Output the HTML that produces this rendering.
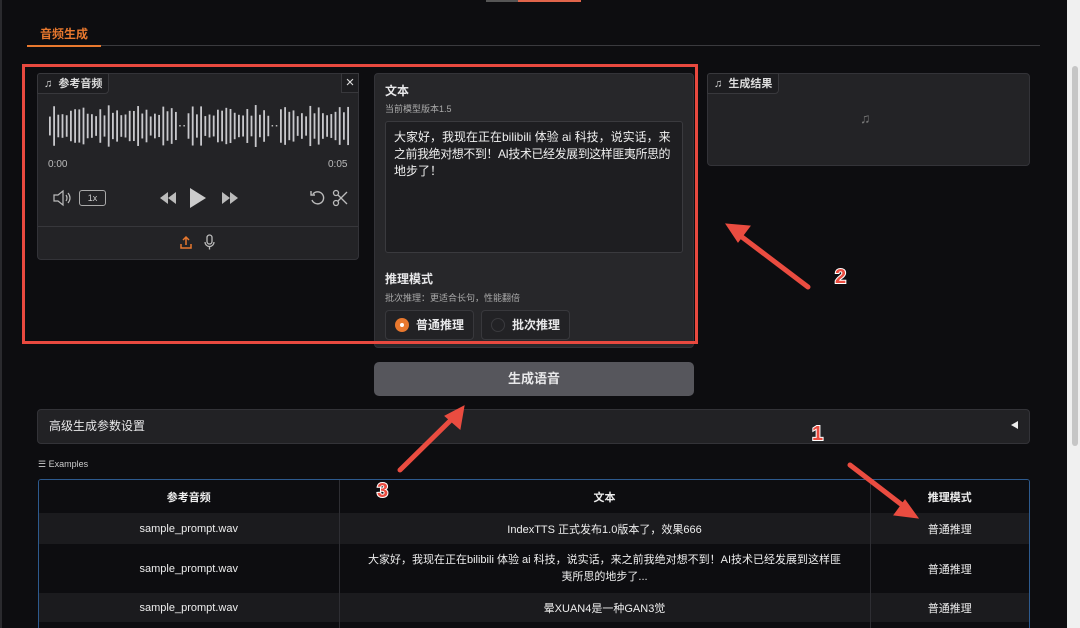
<!DOCTYPE html>
<html><head><meta charset="utf-8"><style>
*{box-sizing:border-box;margin:0;padding:0}
html,body{width:1080px;height:628px;overflow:hidden}
body{background:#0d0d10;font-family:"Liberation Sans","Noto Sans CJK SC",sans-serif;color:#e8e8ea;position:relative}
.a{position:absolute}
.panel{background:#232326;border:1px solid #333338;border-radius:4px}
.lbl{background:#1d1d20;border:1px solid #38383c;border-radius:3px 0 4px 0;font-size:11px;font-weight:bold;color:#ddd;padding:0 6px;line-height:20px}
table{border-collapse:collapse;width:100%;font-size:11px;color:#eee}
td,th{text-align:center;border-right:1px solid #2e2e33;padding:0 10px}
td:last-child,th:last-child{border-right:none}
</style></head><body>
<div class="a" style="left:0;top:0;width:2px;height:628px;background:#2a2a2e"></div>
<div class="a" style="left:486px;top:0;width:32px;height:2px;background:#555"></div>
<div class="a" style="left:518px;top:0;width:63px;height:2px;background:#e0644a"></div>
<div class="a" style="left:1067px;top:0;width:13px;height:628px;background:#f0f0f0"></div>
<div class="a" style="left:1072px;top:66px;width:6px;height:380px;background:#c6c6c6;border-radius:3px"></div>
<div class="a" style="left:40px;top:25px;font-size:12px;font-weight:bold;color:#e8782e">音频生成</div>
<div class="a" style="left:27px;top:45px;width:1013px;height:1px;background:#3a3a3e"></div>
<div class="a" style="left:27px;top:45px;width:74px;height:2px;background:#e8782e"></div>

<div class="a panel" style="left:37px;top:73px;width:322px;height:187px"></div>
<div class="a lbl" style="left:37px;top:73px;height:21px">♫&nbsp; 参考音频</div>
<div class="a" style="left:341px;top:73px;width:18px;height:20px;background:#1d1d20;border:1px solid #38383c;font-size:15px;line-height:18px;text-align:center;color:#ddd">×</div>
<svg class="a" style="left:48px;top:104px" width="302" height="44" id="wv"></svg>
<div class="a" style="left:48px;top:159px;font-size:10px;color:#bbb">0:00</div>
<div class="a" style="left:328px;top:159px;font-size:10px;color:#bbb">0:05</div>
<svg class="a" style="left:52px;top:189px" width="20" height="18" viewBox="0 0 20 18"><path d="M2 6h4l5-4v14l-5-4H2z" fill="none" stroke="#bbb" stroke-width="1.2"/><path d="M14 6q2 3 0 6M16 4q4 5 0 10" fill="none" stroke="#bbb" stroke-width="1.2"/></svg>
<div class="a" style="left:79px;top:190px;width:27px;height:16px;border:1px solid #aaa;border-radius:3px;font-size:9px;text-align:center;line-height:14px;color:#ccc">1x</div>
<svg class="a" style="left:156px;top:186px" width="90" height="24"><path d="M20 6v12l-8-6zM12 6v12l-8-6z" fill="#bbb"/><path d="M34 2v20l16-10z" fill="#ccc"/><path d="M66 6v12l8-6zM74 6v12l8-6z" fill="#bbb"/></svg>
<svg class="a" style="left:309px;top:189px" width="40" height="18"><path d="M4 5a6 6 0 1 1-1 6" fill="none" stroke="#bbb" stroke-width="1.4"/><path d="M2 2v4h4" fill="none" stroke="#bbb" stroke-width="1.4"/><circle cx="27" cy="4" r="2.5" fill="none" stroke="#bbb" stroke-width="1.3"/><circle cx="27" cy="14" r="2.5" fill="none" stroke="#bbb" stroke-width="1.3"/><path d="M29 6l9 9M29 12l9-9" stroke="#bbb" stroke-width="1.3"/></svg>
<div class="a" style="left:38px;top:226px;width:320px;height:1px;background:#37373b"></div>
<svg class="a" style="left:179px;top:234px" width="40" height="16"><path d="M7 11V3M4 6l3-3 3 3M2 10v4h10v-4" fill="none" stroke="#e8782e" stroke-width="1.5"/><rect x="28" y="1" width="5" height="9" rx="2.5" fill="none" stroke="#bbb" stroke-width="1.3"/><path d="M26 8a4.5 4.5 0 0 0 9 0M30.5 12.5v3" fill="none" stroke="#bbb" stroke-width="1.3"/></svg>

<div class="a panel" style="left:374px;top:73px;width:320px;height:275px;background:#27272a"></div>
<div class="a" style="left:385px;top:82px;font-size:12px;font-weight:bold">文本</div>
<div class="a" style="left:385px;top:102px;font-size:9px;color:#aaa">当前模型版本1.5</div>
<div class="a" style="left:385px;top:121px;width:298px;height:132px;background:#1e1e21;border:1px solid #3a3a3e;border-radius:3px;padding:7px 0 7px 8px;font-size:12px;line-height:17px;color:#f0f0f0;white-space:nowrap;overflow:hidden"><span>大家好，我现在正在bilibili 体验 ai 科技，说实话，来</span><br><span style="letter-spacing:-0.45px">之前我绝对想不到！AI技术已经发展到这样匪夷所思的</span><br>地步了！</div>
<div class="a" style="left:385px;top:270px;font-size:12px;font-weight:bold">推理模式</div>
<div class="a" style="left:385px;top:291px;font-size:9px;color:#aaa">批次推理：更适合长句，性能翻倍</div>
<div class="a" style="left:385px;top:310px;width:89px;height:30px;background:#222225;border:1px solid #38383c;border-radius:4px;font-size:12px;font-weight:bold;line-height:28px;padding-left:30px">普通推理</div>
<div class="a" style="left:395px;top:318px;width:14px;height:14px;border-radius:50%;background:#e8782e"></div>
<div class="a" style="left:400px;top:323px;width:4px;height:4px;border-radius:50%;background:#fff"></div>
<div class="a" style="left:481px;top:310px;width:89px;height:30px;background:#222225;border:1px solid #38383c;border-radius:4px;font-size:12px;font-weight:bold;line-height:28px;padding-left:30px">批次推理</div>
<div class="a" style="left:491px;top:318px;width:14px;height:14px;border-radius:50%;border:1px solid #3a3a3e"></div>

<div class="a" style="left:374px;top:362px;width:320px;height:34px;background:#56565c;border-radius:5px;font-size:13px;font-weight:bold;text-align:center;line-height:34px">生成语音</div>

<div class="a panel" style="left:707px;top:73px;width:323px;height:93px"></div>
<div class="a lbl" style="left:707px;top:73px;height:21px">♫&nbsp; 生成结果</div>
<div class="a" style="left:860px;top:110px;font-size:14px;color:#777">♫</div>

<div class="a" style="left:37px;top:409px;width:993px;height:35px;background:#222225;border:1px solid #333338;border-radius:4px;font-size:12px;line-height:33px;padding-left:11px">高级生成参数设置</div>
<div class="a" style="left:1011px;top:421px;width:0;height:0;border-top:4px solid transparent;border-bottom:4px solid transparent;border-right:7px solid #eee"></div>
<div class="a" style="left:38px;top:459px;font-size:9px;color:#ccc">☰ Examples</div>

<div class="a" style="left:38px;top:479px;width:992px;height:160px;border:1px solid #2d5a8e;border-radius:3px;overflow:hidden">
<table>
<colgroup><col style="width:300px"><col style="width:531px"><col></colgroup>
<tr style="height:33px;background:#0d0d10"><th>参考音频</th><th>文本</th><th>推理模式</th></tr>
<tr style="height:31px;background:#1b1b1e"><td>sample_prompt.wav</td><td>IndexTTS 正式发布1.0版本了，效果666</td><td>普通推理</td></tr>
<tr style="height:49px;background:#0d0d10"><td>sample_prompt.wav</td><td style="line-height:17px;white-space:nowrap">大家好，我现在正在bilibili 体验 ai 科技，说实话，来之前我绝对想不到！AI技术已经发展到这样匪<br>夷所思的地步了...</td><td>普通推理</td></tr>
<tr style="height:29px;background:#1b1b1e"><td>sample_prompt.wav</td><td>晕XUAN4是一种GAN3觉</td><td>普通推理</td></tr>
<tr style="height:29px;background:#0d0d10"><td></td><td></td><td></td></tr>
</table></div>

<div class="a" style="left:22px;top:64px;width:676px;height:280px;border:3px solid #e8493f"></div>
<svg class="a" style="left:0;top:0" width="1080" height="628">
<g stroke="#ea4c40" stroke-width="5" stroke-linecap="round" fill="#ea4c40">
<line x1="808" y1="287" x2="738" y2="234"/><path d="M726 224l24 2-12 16z" stroke-width="1"/>
<line x1="400" y1="470" x2="455" y2="416"/><path d="M464 406l-4 23-15-13z" stroke-width="1"/>
<line x1="850" y1="465" x2="906" y2="508"/><path d="M918 518l-24-3 11-15z" stroke-width="1"/>
</g>
<g font-family="Liberation Sans" font-weight="bold" font-size="20" fill="#ea4c40" stroke="#fff" stroke-width="2" paint-order="stroke">
<text x="835" y="283">2</text><text x="377" y="497">3</text><text x="812" y="440">1</text>
</g>
</svg>
<script>
var s=document.getElementById('wv'),h='',n=72;
for(var i=0;i<n;i++){var x=i*4.2+1;var gap=(i>=31&&i<33)||(i>=53&&i<55);
if(gap){h+='<rect x="'+x+'" y="21" width="1.5" height="1.5" fill="#bbb"/>';continue}
var v=0.45+0.55*Math.abs(Math.sin(i*1.7)*Math.cos(i*0.45));var hh=Math.max(10,v*42);
h+='<rect x="'+x+'" y="'+(22-hh/2)+'" width="1.8" height="'+hh+'" fill="#c8c8cc"/>';}
s.innerHTML=h;
</script>
</body></html>
